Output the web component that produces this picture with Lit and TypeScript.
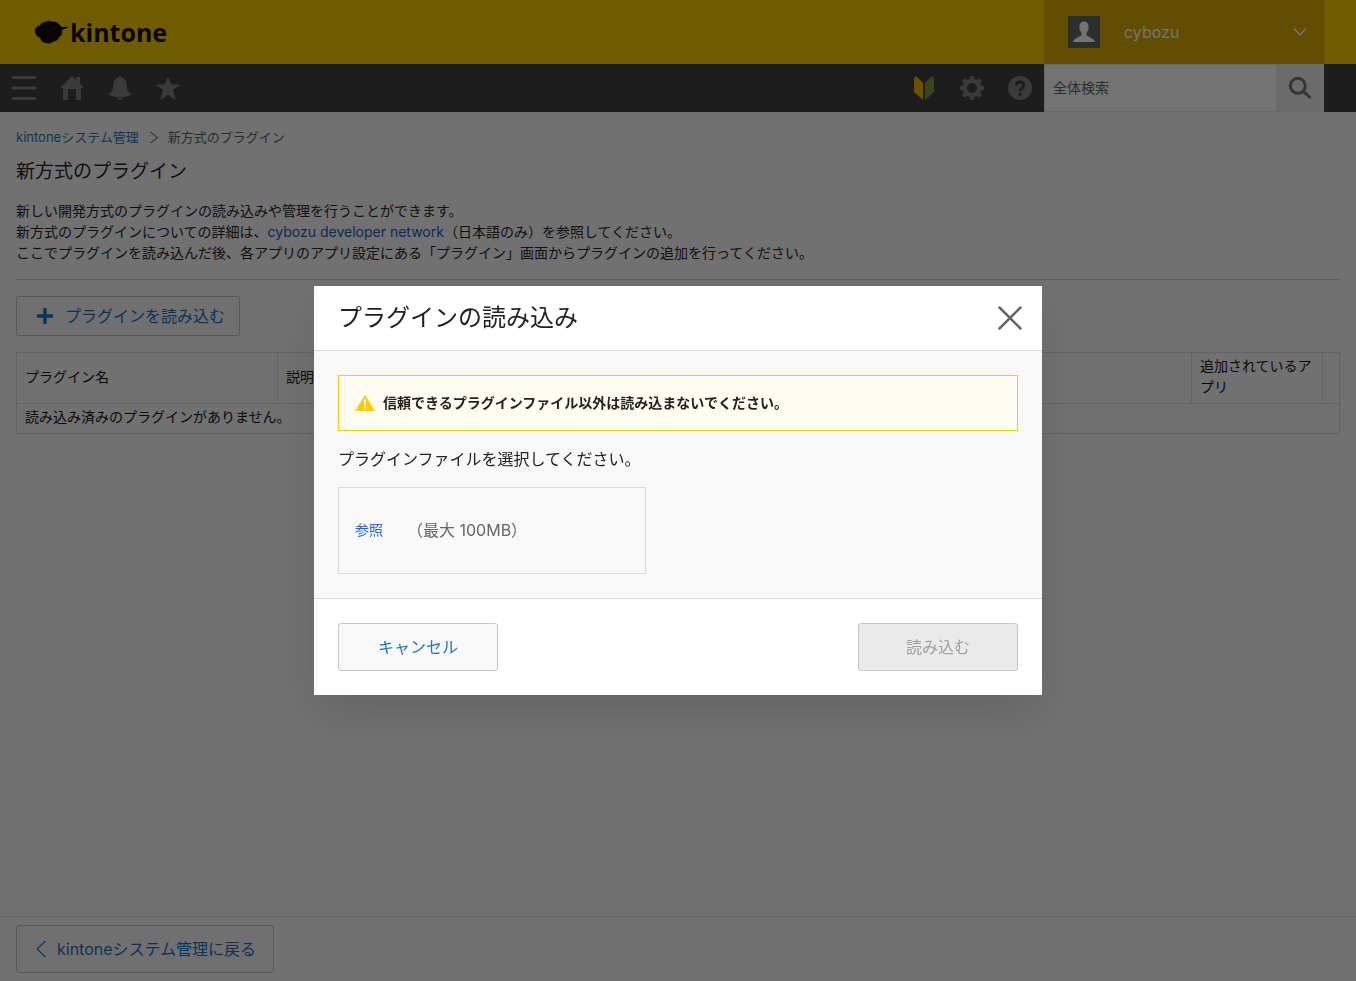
import { LitElement, html, css } from "lit";
import { customElement } from "lit/decorators.js";

@customElement("app-root")
export class AppRoot extends LitElement {
  static styles = css`
    :host {
      display: flex;
      flex-direction: column;
      min-height: 100vh;
      background: #fafafa;
      color: #282828;
      font-family: Inter, "Noto Sans CJK JP", sans-serif;
      font-size: 14px;
      line-height: 21px;
    }
    *, *::before, *::after { box-sizing: border-box; }
    svg { display: block; flex: none; }
    a { color: #1a5bc4; text-decoration: none; }
    button, input { font: inherit; margin: 0; }
    button { cursor: pointer; }

    .brand-bar {
      display: flex;
      justify-content: space-between;
      height: 64px;
      padding: 0 32px;
      background: #f9cc00;
    }
    .brand { display: flex; align-items: center; gap: 2px; color: #140c08; padding-left: 2px; }
    .wordmark { font: 700 25px/32px "Open Sans", "Noto Sans", sans-serif; }
    .account {
      display: flex;
      align-items: center;
      width: 280px;
      padding: 0 16px 0 24px;
      border: 0;
      gap: 24px;
      background: #d7ad00;
      color: #fff;
      font-size: 16px;
      text-align: left;
    }
    .account-name { flex: 1; }

    .tool-bar {
      display: flex;
      height: 48px;
      padding-right: 32px;
      background: #404040;
    }
    .spacer { flex: 1; }
    .tool {
      display: flex;
      align-items: center;
      justify-content: center;
      width: 48px;
      padding: 0;
      border: 0;
      background: none;
      color: #808080;
    }
    .search { display: flex; width: 280px; background: #fff; border: 1px solid #e3e7e8; border-right: 0; }
    .search-input {
      flex: 1;
      min-width: 0;
      padding: 0 8px 2px;
      border: 0;
      background: transparent;
      color: #333;
    }
    .search-input::placeholder { color: #666; opacity: 1; }
    .search-button {
      display: flex;
      align-items: center;
      justify-content: center;
      width: 48px;
      padding: 0;
      border: 0;
      background: #ededed;
      color: #777;
    }

    .content { flex: 1; padding: 16px; }
    .crumbs { display: flex; align-items: center; gap: 8px; font-size: 13px; line-height: 18px; color: #666; }
    .crumbs a { color: #2a7ab8; }
    .title { margin: 12px 0 14px; font-size: 19px; line-height: 28px; font-weight: 400; }
    .lead { margin: 0 0 16px; }
    .actions { padding: 16px 0; border-top: 1px solid #d0d0d0; }
    .button {
      display: inline-flex;
      align-items: center;
      justify-content: center;
      border: 1px solid #c4c6c8;
      border-radius: 3px;
      background: #f8f8f8;
      color: #1d73c0;
      font-size: 16px;
      line-height: 24px;
      white-space: nowrap;
    }
    .load { height: 40px; padding: 0 14px 0 20px; gap: 12px; }
    .grid { width: 100%; border-collapse: collapse; table-layout: fixed; color: #181818; }
    .grid th, .grid td {
      padding: 2px 8px 6px;
      border: 1px solid #ddd;
      text-align: left;
      font-weight: 400;
    }
    .grid th { height: 51px; }
    .grid td { height: 30px; }
    .name-col { width: 261px; }
    .apps-col { width: 131px; }
    .menu-col { width: 17px; }

    .page-footer { padding: 8px 16px; border-top: 1px solid #ddd; }
    .back { height: 48px; padding: 0 17px 0 16px; gap: 8px; }

    .backdrop {
      position: fixed;
      inset: 0;
      display: flex;
      align-items: center;
      justify-content: center;
      background: rgba(0, 0, 0, 0.55);
    }
    .dialog {
      width: 728px;
      max-width: 100%;
      background: #fff;
      color: #222;
      box-shadow: 0 20px 48px rgba(0, 0, 0, 0.12);
    }
    .dialog-head {
      display: flex;
      align-items: center;
      justify-content: space-between;
      height: 65px;
      padding: 0 20px 0 24px;
      border-bottom: 1px solid #dcdcdc;
    }
    .dialog-title { margin: 0; font-size: 24px; line-height: 36px; font-weight: 400; }
    .close { padding: 0; border: 0; background: none; color: #666; }
    .dialog-body { padding: 24px; background: #f8f8f8; }
    .warning {
      display: flex;
      align-items: center;
      gap: 8px;
      height: 56px;
      padding: 0 16px;
      border: 1px solid #facb0b;
      background: #fffdf1;
      font-weight: 700;
    }
    .warning-text, .browse { padding-bottom: 2px; }
    .prompt { margin: 16px 0; font-size: 16px; line-height: 24px; }
    .file {
      display: flex;
      align-items: center;
      gap: 24px;
      width: 308px;
      height: 87px;
      padding: 0 16px;
      border: 1px solid #dcdcdc;
    }
    .browse { color: #2468cf; cursor: pointer; }
    .file-input { position: absolute; width: 1px; height: 1px; opacity: 0; }
    .limit { font-size: 16px; color: #666; }
    .dialog-foot {
      display: flex;
      justify-content: space-between;
      padding: 24px;
      border-top: 1px solid #dcdcdc;
    }
    .wide { width: 160px; height: 48px; }
    .wide:disabled { background: #eaeaea; color: #a0a0a0; cursor: default; }
  `;

  render() {
    return html`
      <header>
        <div class="brand-bar">
          <div class="brand">
            <svg width="34" height="24" viewBox="0 0 34 24" fill="currentColor" aria-hidden="true">
              <path d="M1 11C1 8 3 5.500 6 5.500C7 2.500 9.500 2 11 2.300C12.500 0.500 15.500 0 17.500 1.800C20 1 23 1.700 24.500 4C25.800 4.800 27 6 27.600 7.200L33.500 6.700L33.800 7.600C31.500 9 29 9.500 28 10C28.800 13 27.500 16 25 17.500C24.500 20 21.500 21.600 19 21.400C17 23.600 13.500 24 11 22.800C8.500 22.500 6.500 20.500 6.300 17.700C3 17.200 1 14 1 11Z"/>
            </svg>
            <span class="wordmark">kintone</span>
          </div>
          <button class="account" type="button">
            <svg width="32" height="32" viewBox="0 0 32 32" aria-hidden="true">
              <path fill="#666" d="M0 0h32v32H0z"/>
              <path fill="#fff" d="M16 5.500c3 0 4.600 2.300 4.600 5.500 0 2.500-1 4.700-2.100 6v2.200c1.500 1.600 7.800 3 8.500 6.800H5c.7-3.800 7-5.200 8.500-6.800V17c-1.100-1.300-2.100-3.500-2.100-6 0-3.200 1.600-5.500 4.600-5.500z"/>
            </svg>
            <span class="account-name">cybozu</span>
            <svg width="16" height="16" viewBox="0 0 16 16" fill="none" stroke="currentColor" stroke-width="1.500" aria-hidden="true">
              <path d="M2 4.500l6 6.500 6-6.500"/>
            </svg>
          </button>
        </div>
        <nav class="tool-bar">
          <button class="tool" type="button" aria-label="メニュー">
            <svg width="24" height="24" viewBox="0 0 24 24" fill="currentColor"><path d="M0 0h24v3H0zM0 10.500h24v3H0zM0 21h24v3H0z"/></svg>
          </button>
          <button class="tool" type="button" aria-label="ポータル">
            <svg width="24" height="24" viewBox="0 0 24 24" fill="currentColor"><path d="M12 0l4 3.900V1h4v6.800l4 4.200h-3v12h-5V13H8v11H3V12H0z"/></svg>
          </button>
          <button class="tool" type="button" aria-label="通知">
            <svg width="24" height="24" viewBox="0 0 24 24" fill="currentColor"><path d="M12 0c1.200 0 2 .8 2 1.700 3.300 1 4.500 4 4.700 7.300.3 5.500 1.600 6.700 4.800 9.300-2 2-6.500 3-11.500 3S2.500 20.300.5 18.300C3.700 15.700 5 14.500 5.300 9c.2-3.300 1.400-6.300 4.700-7.300C10 .8 10.800 0 12 0zM9 22.200c2 .2 4 .2 6 0-.6 1.100-1.600 1.800-3 1.800s-2.400-.7-3-1.800z"/></svg>
          </button>
          <button class="tool" type="button" aria-label="お気に入り">
            <svg width="24" height="24" viewBox="0 0 24 24" fill="currentColor"><path d="M12 .5l3.300 8H24l-7 5.600L19.500 24 12 18.700 4.500 24 7 14.100 0 8.500h8.700z"/></svg>
          </button>
          <span class="spacer"></span>
          <button class="tool" type="button" aria-label="はじめに">
            <svg width="24" height="24" viewBox="0 0 24 24"><path fill="#f0b400" d="M2 2.500L4 0l7 7v17l-9-8z"/><path fill="#739f3d" d="M22 2.500L20 0l-7 7v17l9-8z"/></svg>
          </button>
          <button class="tool" type="button" aria-label="設定">
            <svg width="24" height="24" viewBox="0 0 24 24" fill="currentColor" fill-rule="evenodd"><path d="M10.200 0h3.600l.6 3.200 2.200.9 2.900-1.900 2.500 2.500-1.800 2.800.8 2.100 3 .6v3.600l-3 .6-.8 2.100 1.800 2.800-2.500 2.500-2.900-1.900-2.200.9-.6 3.200h-3.600l-.6-3.200-2.200-.9-2.900 1.900L2 19.300l1.800-2.800-.8-2.100-3-.6v-3.600l3-.6.800-2.100L2 4.700l2.500-2.500 2.900 1.900 2.200-.9zM12 7a5 5 0 100 10 5 5 0 000-10z"/></svg>
          </button>
          <button class="tool" type="button" aria-label="ヘルプ">
            <svg width="24" height="24" viewBox="0 0 24 24"><circle cx="12" cy="12" r="12" fill="currentColor"/><path d="M8.300 9.200C8.400 6.900 10 6 12 6c2.200 0 3.800 1.200 3.800 3.200 0 3-3.700 2.900-3.700 6" fill="none" stroke="#404040" stroke-width="2.800"/><path d="M10.500 16.800h3v3h-3z" fill="#404040"/></svg>
          </button>
          <form class="search" role="search">
            <input class="search-input" type="text" placeholder="全体検索" aria-label="全体検索">
            <button class="search-button" type="button" aria-label="検索">
              <svg width="24" height="24" viewBox="0 0 24 24" fill="none" stroke="currentColor" stroke-width="3"><circle cx="9.800" cy="9.800" r="7.500"/><path d="M15 15l7.500 7"/></svg>
            </button>
          </form>
        </nav>
      </header>

      <main class="content">
        <nav class="crumbs">
          <a href="#">kintoneシステム管理</a>
          <svg width="13" height="14" viewBox="0 0 13 14" fill="none" stroke="#888" stroke-width="1.300"><path d="M3.500 2l7 5.500-7 5.500"/></svg>
          <span>新方式のプラグイン</span>
        </nav>
        <h1 class="title">新方式のプラグイン</h1>
        <p class="lead">
          新しい開発方式のプラグインの読み込みや管理を行うことができます。<br>新方式のプラグインについての詳細は、<a href="#">cybozu developer network</a>（日本語のみ）を参照してください。<br>ここでプラグインを読み込んだ後、各アプリのアプリ設定にある「プラグイン」画面からプラグインの追加を行ってください。
        </p>
        <div class="actions">
          <button class="button load" type="button">
            <svg width="16" height="16" viewBox="0 0 16 16" fill="currentColor"><path d="M6.300 0h3.400v6.300H16v3.400H9.700V16H6.300V9.700H0V6.300h6.300z"/></svg>
            プラグインを読み込む
          </button>
        </div>
        <table class="grid">
          <colgroup><col class="name-col"><col><col class="apps-col"><col class="menu-col"></colgroup>
          <thead>
            <tr><th>プラグイン名</th><th>説明</th><th>追加されているアプリ</th><th></th></tr>
          </thead>
          <tbody>
            <tr><td colspan="4">読み込み済みのプラグインがありません。</td></tr>
          </tbody>
        </table>
      </main>

      <footer class="page-footer">
        <a class="button back" href="#">
          <svg width="16" height="18" viewBox="0 0 16 18" fill="none" stroke="currentColor" stroke-width="1.100"><path d="M12.500 1L4 9l8.500 8"/></svg>
          kintoneシステム管理に戻る
        </a>
      </footer>

      <div class="backdrop">
        <section class="dialog" role="dialog" aria-modal="true" aria-labelledby="dialog-title">
          <header class="dialog-head">
            <h2 class="dialog-title" id="dialog-title">プラグインの読み込み</h2>
            <button class="close" type="button" aria-label="閉じる">
              <svg width="24" height="24" viewBox="0 0 24 24" fill="none" stroke="currentColor" stroke-width="2.500" stroke-linecap="round"><path d="M1.500 1.500l21 21M22.500 1.500l-21 21"/></svg>
            </button>
          </header>
          <div class="dialog-body">
            <div class="warning" role="alert">
              <svg width="20" height="16" viewBox="0 0 20 16"><path fill="#facb0b" d="M10 0l10 16H0z"/><path fill="#fff" d="M8.800 4.500h2.400l-.5 5.500H9.300zM8.800 11.300h2.400v2.200H8.800z"/></svg>
              <span class="warning-text">信頼できるプラグインファイル以外は読み込まないでください。</span>
            </div>
            <p class="prompt">プラグインファイルを選択してください。</p>
            <div class="file">
              <label class="browse" for="plugin-file">参照</label>
              <input class="file-input" id="plugin-file" type="file">
              <span class="limit">（最大 100MB）</span>
            </div>
          </div>
          <footer class="dialog-foot">
            <button class="button wide" type="button">キャンセル</button>
            <button class="button wide" type="button" disabled>読み込む</button>
          </footer>
        </section>
      </div>
    `;
  }
}
